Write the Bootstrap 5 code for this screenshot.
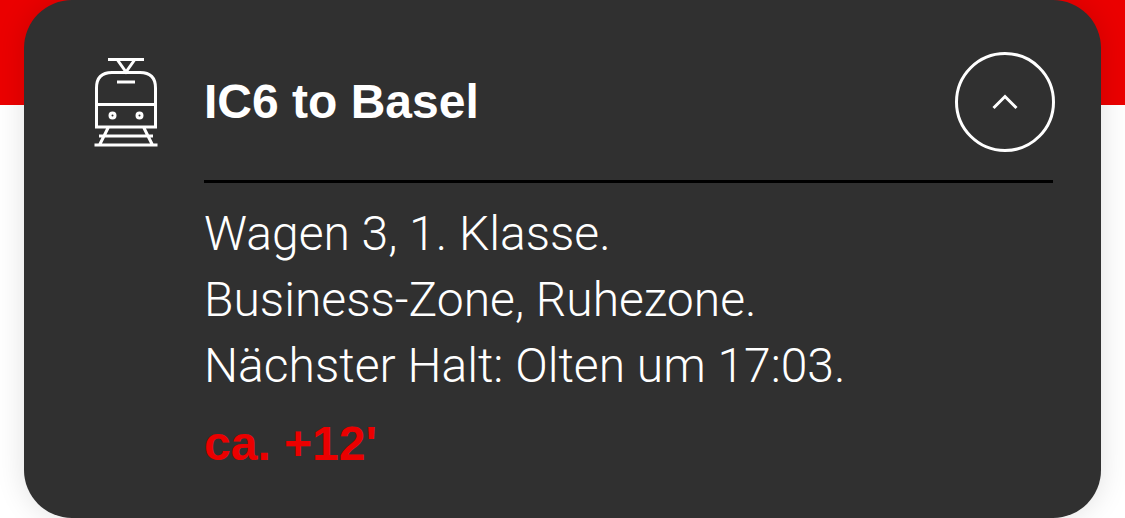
<!DOCTYPE html>
<html lang="de">
<head>
<meta charset="utf-8">
<meta name="viewport" content="width=device-width, initial-scale=1">
<title>IC6 to Basel</title>
<link href="https://cdn.jsdelivr.net/npm/bootstrap@5.3.0/dist/css/bootstrap.min.css" rel="stylesheet">
<style>
  body {
    font-family: "Liberation Sans", Arial, sans-serif;
    background: linear-gradient(#eb0000 105px, #fff 105px) no-repeat;
  }
  .trip-card {
    background: #303030;
    border-radius: 48px;
    padding: 52px 46px 41px 70px;
    box-shadow: 0 0 30px rgba(0, 0, 0, .12);
  }
  .trip-icon { width: 64px; height: 90px; margin-right: 46px; }
  .trip-head { padding-bottom: 28px; }
  .trip-title, .trip-delay { font-size: 48px; line-height: 66px; font-weight: 700; }
  .trip-rule { border-top: 3px solid #000; opacity: 1; margin: 0 2px 18px 110px; }
  .trip-body { margin-left: 110px; }
  .trip-text { font-family: Roboto, "Liberation Sans", sans-serif; font-weight: 300; font-size: 48px; line-height: 66px; margin-bottom: 12px; }
  .trip-delay { color: #eb0000; }
  .trip-toggle { width: 100px; height: 100px; border: 3px solid #fff; background: transparent; }
</style>
</head>
<body>
<main class="px-4">
  <article class="trip-card text-white">
    <header class="trip-head d-flex align-items-center">
      <svg class="trip-icon flex-shrink-0" viewBox="0 0 64 90" fill="none" stroke="#fff" stroke-width="3" aria-hidden="true">
        <path d="M14 2.500H50M23.500 3L32 15L40.500 3M23 25H41M2.500 70V31Q2.500 15.500 18 15.500H46Q61.500 15.500 61.500 31V70ZM2.500 47.500H61.500M14.500 70L5.500 88M49.500 70L58.500 88M5 79H59M.5 88H63.500"/>
        <circle cx="18.500" cy="58.500" r="2.500"/>
        <circle cx="45.500" cy="58.500" r="2.500"/>
      </svg>
      <h1 class="trip-title flex-grow-1 m-0">IC6 to Basel</h1>
      <button type="button" class="trip-toggle btn rounded-circle p-0 d-flex align-items-center justify-content-center flex-shrink-0" data-bs-toggle="collapse" data-bs-target="#trip-details" aria-expanded="true" aria-controls="trip-details" aria-label="Details">
        <svg width="26" height="16" viewBox="0 0 26 16" fill="none" stroke="#fff" stroke-width="3" aria-hidden="true"><path d="M1.500 14L13 2.500L24.500 14"/></svg>
      </button>
    </header>
    <div class="collapse show" id="trip-details">
      <hr class="trip-rule">
      <div class="trip-body">
        <p class="trip-text">Wagen 3, 1. Klasse.<br>Business-Zone, Ruhezone.<br>Nächster Halt: Olten um 17:03.</p>
        <p class="trip-delay m-0">ca. +12'</p>
      </div>
    </div>
  </article>
</main>
<script src="https://cdn.jsdelivr.net/npm/bootstrap@5.3.0/dist/js/bootstrap.bundle.min.js"></script>
</body>
</html>
